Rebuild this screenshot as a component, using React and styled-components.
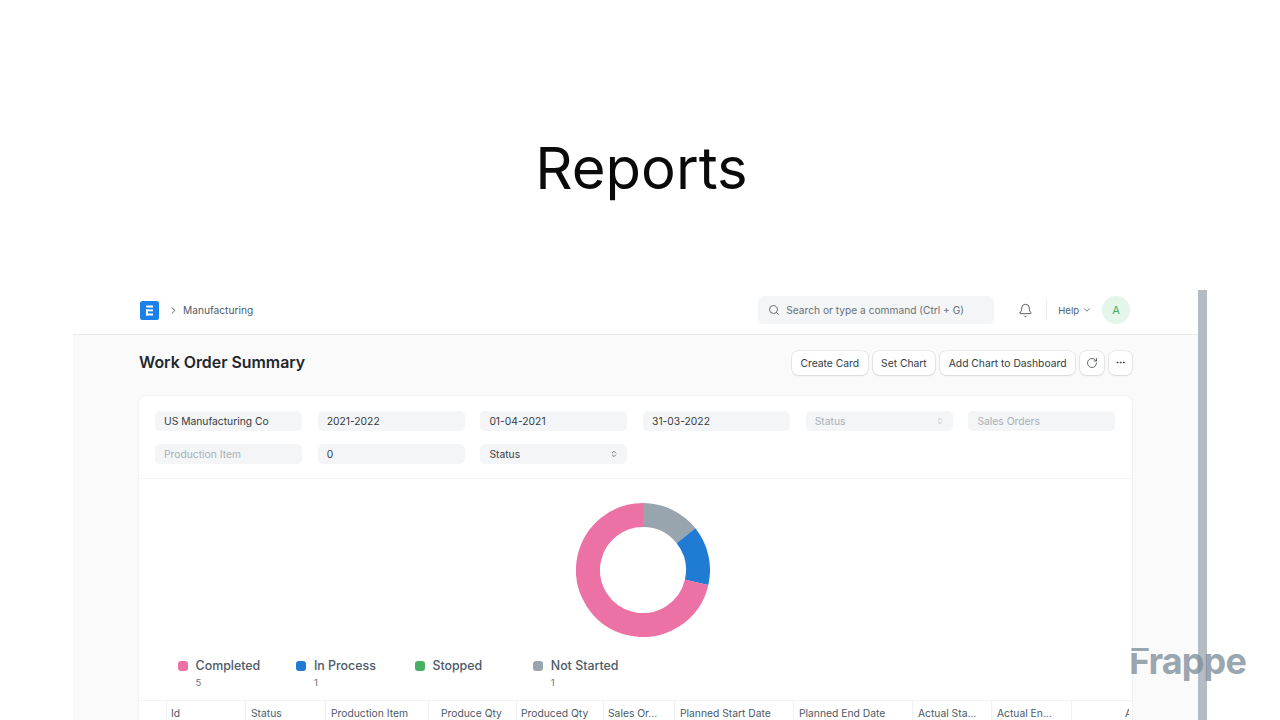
import styled, { createGlobalStyle } from "styled-components";
import { Search, Bell, ChevronDown, ChevronRight, RotateCw, MoreHorizontal, ChevronsUpDown } from "lucide-react";

const GlobalStyle = createGlobalStyle`
  html, body {
    margin: 0;
    padding: 0;
    background: #fff;
    font-family: Inter, "Liberation Sans", sans-serif;
  }
  * { box-sizing: border-box; }
`;

const Page = styled.div`
  position: relative;
  width: 1280px;
  height: 720px;
  overflow: hidden;
  background: #fff;
`;

const Hero = styled.div`
  height: 290px;
  padding-top: 46px;
  display: flex;
  align-items: center;
  justify-content: center;
`;

const HeroTitle = styled.h1`
  margin: 0 0 0 3px;
  font-size: 58px;
  font-weight: 400;
  line-height: 68px;
  color: #0a0a0a;
`;

const Frame = styled.div`
  margin-left: 73px;
  width: 1134px;
  height: 430px;
  display: flex;
`;

const Scrollbar = styled.div`
  width: 9px;
  background: #b3bcc3;
`;

const Desk = styled.div`
  width: 1125px;
  background: #fafafa;
`;

const Navbar = styled.div`
  height: 45px;
  padding: 0 68px 4px 67px;
  background: #fff;
  border-bottom: 1px solid #e8eaec;
  display: flex;
  align-items: center;
`;

const CrumbArrow = styled(ChevronRight)`
  margin-left: 9px;
  color: #4c5a67;
`;

const Crumb = styled.span`
  margin-left: 4px;
  font-size: 10.2px;
  color: #4c5a67;
`;

const SearchBox = styled.div`
  margin-left: auto;
  width: 236px;
  height: 28px;
  padding: 0 10px;
  border-radius: 6px;
  background: #f4f5f6;
  display: flex;
  align-items: center;
  gap: 6px;
  font-size: 10.2px;
  color: #687178;
`;

const BellWrap = styled.div`
  margin-left: 24px;
  display: flex;
  color: #333c44;
`;

const NavDivider = styled.div`
  width: 1px;
  height: 20px;
  margin: 0 11px 0 13px;
  background: #eceef0;
`;

const Help = styled.div`
  display: flex;
  align-items: center;
  gap: 3px;
  font-size: 9.5px;
  color: #4c5a67;
`;

const Avatar = styled.div`
  margin-left: 10px;
  width: 28px;
  height: 28px;
  border-radius: 50%;
  background: #e4f5e9;
  color: #4aa864;
  font-size: 11px;
  display: flex;
  align-items: center;
  justify-content: center;
`;

const Container = styled.div`
  padding: 0 66px;
`;

const PageHead = styled.div`
  height: 61px;
  padding-bottom: 6px;
  display: flex;
  align-items: center;
  justify-content: space-between;
`;

const PageTitle = styled.h2`
  margin: 0;
  font-size: 15.9px;
  font-weight: 600;
  color: #1f272e;
`;

const Actions = styled.div`
  display: flex;
  gap: 5px;
`;

const Button = styled.button`
  height: 24px;
  padding: 0 ${({ $square }) => ($square ? "0" : "8.5px")};
  width: ${({ $square }) => ($square ? "23.5px" : "auto")};
  border: none;
  border-radius: 6px;
  background: #fff;
  box-shadow: 0 0 0 0.5px rgba(0, 0, 0, 0.13), 0 1px 2px rgba(0, 0, 0, 0.08);
  font-family: inherit;
  font-size: 10.3px;
  color: #333c44;
  display: flex;
  align-items: center;
  justify-content: center;
`;

const Card = styled.div`
  width: 993px;
  height: 340px;
  background: #fff;
  border-radius: 8px 8px 0 0;
  box-shadow: 0 0 0 1px #f1f2f3;
  overflow: hidden;
`;

const Filters = styled.div`
  height: 83px;
  padding: 15px 16px;
  border-bottom: 1px solid #f3f4f5;
  display: grid;
  grid-template-columns: repeat(6, 147px);
  grid-auto-rows: 20px;
  column-gap: 15.7px;
  row-gap: 13px;
`;

const Field = styled.div`
  padding: 0 9px;
  border-radius: 5px;
  background: #f4f5f6;
  display: flex;
  align-items: center;
  justify-content: space-between;
  font-size: 10.3px;
  color: ${({ $placeholder }) => ($placeholder ? "#a6b0b8" : "#333c44")};
`;

const ChartArea = styled.div`
  height: 221px;
  padding-top: 24px;
  display: flex;
  flex-direction: column;
`;

const Donut = styled.svg`
  display: block;
  margin-left: 437px;
`;

const Legend = styled.div`
  margin-top: 21px;
  padding-left: 39px;
  display: flex;
`;

const LegendItem = styled.div`
  width: 118.4px;
  display: grid;
  grid-template-columns: 10px auto;
  grid-template-rows: 16px 12px;
  column-gap: 7.6px;
  row-gap: 3px;
  align-items: center;
  align-content: start;
  justify-content: start;
`;

const Swatch = styled.span`
  width: 10px;
  height: 10px;
  border-radius: 3px;
  background: ${({ $color }) => $color};
`;

const LegendLabel = styled.span`
  font-size: 12.4px;
  font-weight: 500;
  line-height: 16px;
  color: #4c5a67;
`;

const LegendValue = styled.span`
  grid-column: 2;
  font-size: 9.5px;
  line-height: 12px;
  color: #687178;
`;

const TableHead = styled.div`
  display: grid;
  grid-template-columns: 27px 79px 80px 103px 88px 87px 71px 119px 119px 79px 80px 58px;
  height: 40px;
  border-top: 1px solid #f1f2f3;
`;

const HeadCell = styled.div`
  padding: 5px 0 0 ${({ $indent }) => $indent || 5}px;
  border-left: ${({ $first }) => ($first ? "none" : "1px solid #f1f2f3")};
  overflow: hidden;
  white-space: nowrap;
  font-size: 10.3px;
  line-height: 14px;
  color: #4c5a67;
`;

/* the notch cuts the top bar of the F away from its stem, as in the wordmark */
const Watermark = styled.div`
  position: absolute;
  left: 1129px;
  top: 639px;
  font-size: 36px;
  font-weight: 700;
  line-height: 44px;
  letter-spacing: -0.9px;
  color: rgba(128, 143, 154, 0.8);
  &::after {
    content: "";
    position: absolute;
    left: 1px;
    top: 12px;
    width: 22px;
    height: 2px;
    background: #fafafa;
  }
`;

const Logo = () => (
  <svg width="19" height="19" viewBox="0 0 19 19">
    <rect width="19" height="19" rx="2.5" fill="#1b80ea" />
    <rect x="6" y="4.5" width="7" height="2" fill="#fff" />
    <rect x="6" y="8.5" width="7" height="1.8" fill="#fff" />
    <rect x="6" y="8.5" width="2" height="6" fill="#fff" />
    <rect x="6" y="12.5" width="7" height="2" fill="#fff" />
  </svg>
);

const filters = [
  { label: "US Manufacturing Co" },
  { label: "2021-2022" },
  { label: "01-04-2021" },
  { label: "31-03-2022" },
  { label: "Status", placeholder: true, select: true },
  { label: "Sales Orders", placeholder: true },
  { label: "Production Item", placeholder: true },
  { label: "0" },
  { label: "Status", select: true },
];

const legend = [
  { label: "Completed", value: 5, color: "#ec72a6" },
  { label: "In Process", value: 1, color: "#1f7cd2" },
  { label: "Stopped", color: "#48b065" },
  { label: "Not Started", value: 1, color: "#98a4ae" },
];

const columns = [
  { label: "" },
  { label: "Id", indent: 4 },
  { label: "Status" },
  { label: "Production Item" },
  { label: "Produce Qty", indent: 12 },
  { label: "Produced Qty", indent: 4 },
  { label: "Sales Or...", indent: 4 },
  { label: "Planned Start Date" },
  { label: "Planned End Date" },
  { label: "Actual Sta..." },
  { label: "Actual En..." },
  { label: "Actual", indent: 53 },
];

const R = 55;
const CIRC = 2 * Math.PI * R;
const slices = [
  { color: "#98a4ae", share: 1 / 7, start: 0 },
  { color: "#1f7cd2", share: 1 / 7, start: 1 / 7 },
  { color: "#ec72a6", share: 5 / 7, start: 2 / 7 },
];

export default function App() {
  return (
    <Page>
      <GlobalStyle />
      <Hero>
        <HeroTitle>Reports</HeroTitle>
      </Hero>
      <Frame>
        <Desk>
          <Navbar>
            <Logo />
            <CrumbArrow size={11} />
            <Crumb>Manufacturing</Crumb>
            <SearchBox>
              <Search size={12} />
              Search or type a command (Ctrl + G)
            </SearchBox>
            <BellWrap>
              <Bell size={15} strokeWidth={1.3} />
            </BellWrap>
            <NavDivider />
            <Help>
              Help <ChevronDown size={10} />
            </Help>
            <Avatar>A</Avatar>
          </Navbar>
          <Container>
            <PageHead>
              <PageTitle>Work Order Summary</PageTitle>
              <Actions>
                <Button>Create Card</Button>
                <Button>Set Chart</Button>
                <Button>Add Chart to Dashboard</Button>
                <Button $square>
                  <RotateCw size={12} strokeWidth={1.5} />
                </Button>
                <Button $square>
                  <MoreHorizontal size={11} />
                </Button>
              </Actions>
            </PageHead>
            <Card>
              <Filters>
                {filters.map((f, i) => (
                  <Field key={i} $placeholder={f.placeholder}>
                    {f.label}
                    {f.select && <ChevronsUpDown size={8} />}
                  </Field>
                ))}
              </Filters>
              <ChartArea>
                <Donut width="134" height="134" viewBox="0 0 134 134">
                  {slices.map((s) => (
                    <circle
                      key={s.color}
                      cx="67"
                      cy="67"
                      r={R}
                      fill="none"
                      stroke={s.color}
                      strokeWidth="24"
                      strokeDasharray={`${s.share * CIRC} ${CIRC}`}
                      transform={`rotate(${s.start * 360 - 90} 67 67)`}
                    />
                  ))}
                </Donut>
                <Legend>
                  {legend.map((l) => (
                    <LegendItem key={l.label}>
                      <Swatch $color={l.color} />
                      <LegendLabel>{l.label}</LegendLabel>
                      <LegendValue>{l.value}</LegendValue>
                    </LegendItem>
                  ))}
                </Legend>
              </ChartArea>
              <TableHead>
                {columns.map((c, i) => (
                  <HeadCell key={i} $first={i === 0} $indent={c.indent}>
                    {c.label}
                  </HeadCell>
                ))}
              </TableHead>
            </Card>
          </Container>
        </Desk>
        <Scrollbar />
      </Frame>
      <Watermark>Frappe</Watermark>
    </Page>
  );
}
